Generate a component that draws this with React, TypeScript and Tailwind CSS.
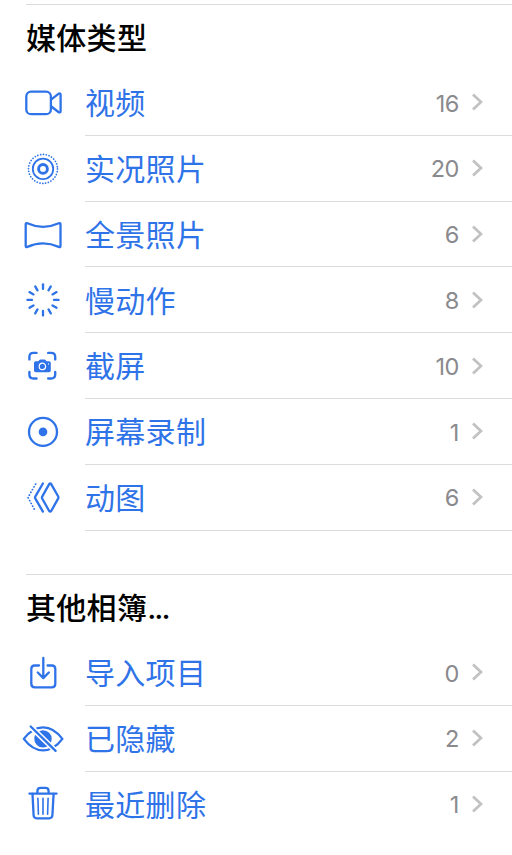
import React from 'react';

interface Album {
  name: string;
  count: number;
  icon: React.ReactNode;
}

interface AlbumSectionProps {
  title: string;
  more?: boolean;
  albums: Album[];
  closed?: boolean;
}

const rayAngles = [0, 30, 60, 90, 120, 150, 180, 210, 240, 270, 300, 330];

// Every icon is drawn around the origin of a 60 x 60 box
const VideoIcon = () => (
  <>
    <rect x="-18.7" y="-11.3" width="24.6" height="22.6" rx="4.8" />
    <path d="M6.4 -3.6L13.4 -9.1Q15.6 -10.2 15.6 -8.2V8.2Q15.6 10.2 13.4 9.1L6.4 3.6" />
  </>
);

const LiveIcon = () => (
  <>
    <circle cx="-2" cy="0" r="14.5" strokeWidth="1.7" strokeDasharray="0.1 2.747" />
    <circle cx="-2" cy="0" r="10.2" strokeWidth="1.8" />
    <circle cx="-2" cy="0" r="4.4" strokeWidth="2.9" />
  </>
);

const PanoramaIcon = () => (
  <path d="M-19.3 -10.6Q-19.3 -12.2 -17.6 -11.6Q-2 -4.4 13.8 -11.6Q15.5 -12.2 15.5 -10.6V11Q15.5 12.6 13.8 12Q-2 4.8 -17.6 12Q-19.3 12.6 -19.3 11Z" />
);

const SlowMotionIcon = () => (
  <>
    {rayAngles.map((angle) => (
      <path key={angle} d="M-2 -15.6V-11" transform={`rotate(${angle} -2 0)`} />
    ))}
  </>
);

const ScreenshotIcon = () => (
  <>
    <path
      strokeWidth="2.4"
      d="M-15.6 -6.5V-9Q-15.6 -13 -11.6 -13H-8.5M3.2 -13H6.2Q10.2 -13 10.2 -9V-6.5M10.2 6V8.6Q10.2 12.6 6.2 12.6H3.2M-8.5 12.6H-11.6Q-15.6 12.6 -15.6 8.6V6"
    />
    <path
      fill="#2f73e8"
      stroke="none"
      d="M-9.2 -4.6H-6.7L-5.6 -6Q-5.2 -6.4 -4.6 -6.4H-0.5Q0.1 -6.4 0.5 -6L1.6 -4.6H4Q5.8 -4.6 5.8 -2.8V4.6Q5.8 6.3 4 6.3H-9.2Q-11 6.3 -11 4.6V-2.8Q-11 -4.6 -9.2 -4.6Z"
    />
    <circle cx="-2.6" cy="0.5" r="3.2" stroke="white" strokeWidth="1.2" />
    <circle cx="3.5" cy="-2" r="0.6" fill="white" stroke="none" />
  </>
);

const RecordingIcon = () => (
  <>
    <circle cx="-2" cy="0" r="14" />
    <circle cx="-2" cy="0" r="4.3" fill="#2f73e8" stroke="none" />
  </>
);

const AnimatedIcon = () => (
  <>
    <path d="M4.2 -13.8Q5.2 -15 6.2 -13.8L13.1 -1.6Q13.8 -0.4 13.1 0.8L6.2 13.1Q5.2 14.3 4.2 13.1L-2.7 0.8Q-3.4 -0.4 -2.7 -1.6Z" />
    <path d="M-2.1 -14.4L-9.6 -1.6Q-10.3 -0.4 -9.6 0.8L-2.1 13.7" />
    <path strokeWidth="1.8" strokeDasharray="0.1 3.05" d="M-9.4 -13.8L-17 -0.4L-9.4 13.6" />
  </>
);

const ImportIcon = () => (
  <>
    <path d="M-6 -7.4H-10.2Q-13.7 -7.4 -13.7 -4V10.8Q-13.7 14.4 -10.2 14.4H6.8Q10.3 14.4 10.3 10.8V-4Q10.3 -7.4 6.8 -7.4H2.6" />
    <path d="M-1.7 -15V5M-7.2 -0.4L-1.7 5.2L3.8 -0.4" />
  </>
);

const HiddenIcon = () => (
  <>
    <path d="M-21.2 0Q-12.5 -11.5 -1.9 -11.5Q8.7 -11.5 17.4 0Q8.7 11.5 -1.9 11.5Q-12.5 11.5 -21.2 0Z" />
    <circle cx="-2" cy="0" r="8.7" fill="#2f73e8" stroke="none" />
    <path stroke="white" strokeWidth="5.4" d="M-14.5 -12.4L10.6 12" />
    <path d="M-14.3 -12.4L10.6 12" />
  </>
);

const TrashIcon = () => (
  <>
    <path d="M-15.6 -11.3H11.6M-7.6 -11.4V-13.8Q-7.6 -17.1 -4.4 -17.1H0.4Q3.6 -17.1 3.6 -13.8V-11.4" />
    <path d="M-12.5 -11L-11.4 10.4Q-11.2 13.4 -8.2 13.4H4.2Q7.2 13.4 7.4 10.4L8.6 -11" />
    <path strokeWidth="1.6" d="M-7.1 -6.7L-6.6 9.3M-2 -6.7V9.3M3.1 -6.7L2.6 9.3" />
  </>
);

const mediaTypes: Album[] = [
  { name: '视频', count: 16, icon: <VideoIcon /> },
  { name: '实况照片', count: 20, icon: <LiveIcon /> },
  { name: '全景照片', count: 6, icon: <PanoramaIcon /> },
  { name: '慢动作', count: 8, icon: <SlowMotionIcon /> },
  { name: '截屏', count: 10, icon: <ScreenshotIcon /> },
  { name: '屏幕录制', count: 1, icon: <RecordingIcon /> },
  { name: '动图', count: 6, icon: <AnimatedIcon /> },
];

const otherAlbums: Album[] = [
  { name: '导入项目', count: 0, icon: <ImportIcon /> },
  { name: '已隐藏', count: 2, icon: <HiddenIcon /> },
  { name: '最近删除', count: 1, icon: <TrashIcon /> },
];

const AlbumSection: React.FC<AlbumSectionProps> = ({ title, more, albums, closed }) => (
  <section>
    <h2 className="ml-[26px] h-[66.1px] border-t border-[#dcdcdd] pt-[11px] text-[30px] leading-[44px] font-medium tracking-[0.3px] text-black">
      {title}
      {more && <span className="tracking-[-2px]">...</span>}
    </h2>
    <ul>
      {albums.map((album, index) => (
        <li key={album.name} className="flex h-[65.8px] pl-[15px]">
          <svg
            className="h-[65.8px] w-[60px] shrink-0"
            viewBox="-30 -30 60 60"
            fill="none"
            stroke="#2f73e8"
            strokeWidth="2.3"
            strokeLinecap="round"
            strokeLinejoin="round"
          >
            {album.icon}
          </svg>
          <div
            className={`ml-[10px] flex flex-1 items-center border-b pr-[29px] ${
              closed || index < albums.length - 1 ? 'border-[#dcdcdd]' : 'border-transparent'
            }`}
          >
            <span className="flex-1 pt-[1.4px] text-[30px] leading-[44px] tracking-[0.3px] text-[#2f73e8]">
              {album.name}
            </span>
            <span className="pt-[1.6px] text-[23.5px] tracking-[-0.4px] text-[#8a8a8e]">{album.count}</span>
            <svg
              className="ml-[12px] h-5 w-3"
              viewBox="0 0 12 20"
              fill="none"
              stroke="#c2c2c4"
              strokeWidth="2.8"
            >
              <path d="M2 2.5L10 10L2 17.5" />
            </svg>
          </div>
        </li>
      ))}
    </ul>
  </section>
);

const App: React.FC = () => {
  return (
    <main className="h-[855px] w-[512px] overflow-hidden bg-white pt-[4px] font-['Inter','Noto_Sans_CJK_SC',sans-serif]">
      <AlbumSection title="媒体类型" albums={mediaTypes} closed />
      <div className="h-[43.3px]" />
      <AlbumSection title="其他相簿" more albums={otherAlbums} />
    </main>
  );
};

export default App;
